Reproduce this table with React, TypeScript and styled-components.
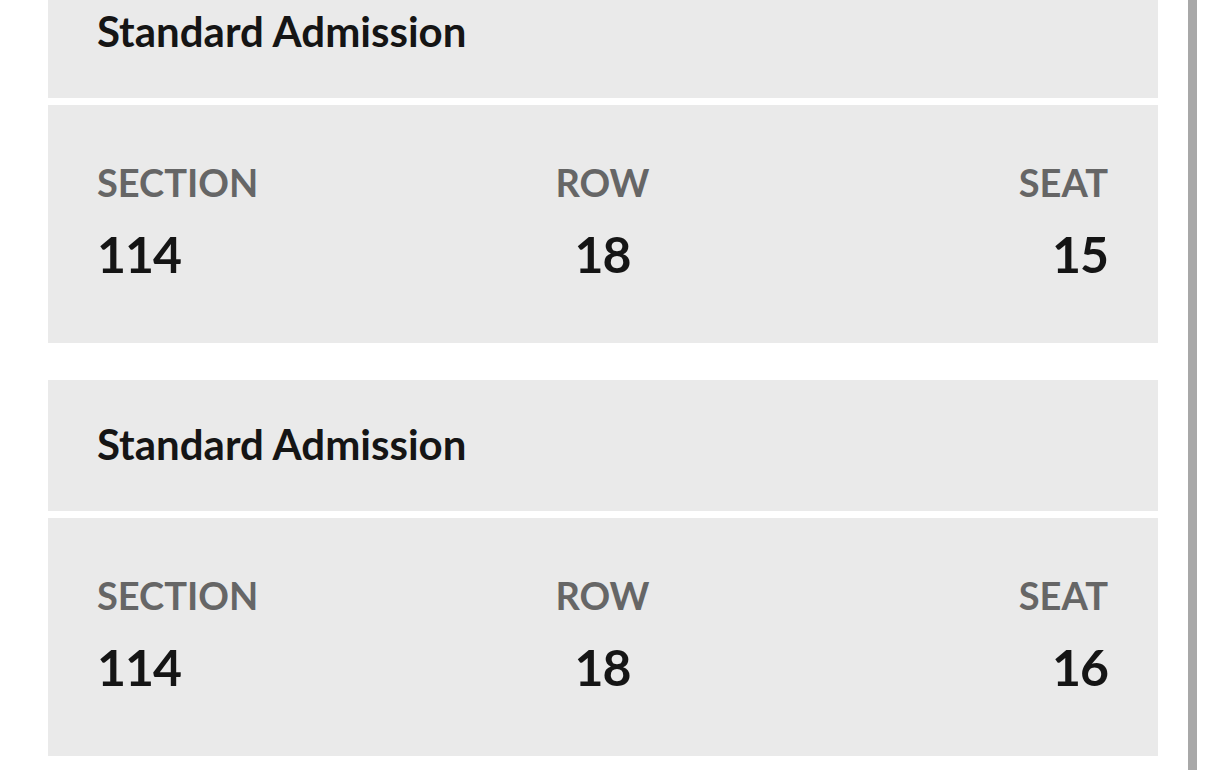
import * as React from "react"
import styled, { createGlobalStyle } from "styled-components"

const GlobalStyle = createGlobalStyle`
  html, body {
    margin: 0;
    padding: 0;
    background: #ffffff;
  }
  body {
    font-family: Lato, "Noto Sans", "Liberation Sans", sans-serif;
    color: #151515;
  }
`

interface Ticket {
  title: string
  section: string
  row: string
  seat: string
}

const tickets: Ticket[] = [
  { title: "Standard Admission", section: "114", row: "18", seat: "15" },
  { title: "Standard Admission", section: "114", row: "18", seat: "16" },
]

const Page = styled.div`
  display: flex;
  height: 770px;
  overflow: hidden;
`

const List = styled.div`
  display: flex;
  flex-direction: column;
  gap: 37px;
  width: 1110px;
  margin: -33px 0 0 48px;
`

const Scrollbar = styled.div`
  width: 9px;
  margin-left: 30px;
  background: #a8a8a8;
  flex-shrink: 0;
`

const Card = styled.div`
  display: flex;
  flex-direction: column;
  gap: 7px;
`

const Header = styled.div`
  height: 131px;
  box-sizing: border-box;
  display: flex;
  align-items: center;
  padding: 0 49px 3px;
  background: #eaeaea;
`

const Title = styled.h2`
  margin: 0;
  font-size: 42px;
  font-weight: 700;
  letter-spacing: 0;
  color: #151515;
`

const Body = styled.div`
  height: 238px;
  box-sizing: border-box;
  padding: 56px 50px 0 49px;
  display: grid;
  grid-template-columns: 1fr 1fr 1fr;
  background: #eaeaea;
`

const Field = styled.div<{ $align: "left" | "center" | "right" }>`
  display: flex;
  flex-direction: column;
  align-items: ${(p) =>
    p.$align === "left" ? "flex-start" : p.$align === "right" ? "flex-end" : "center"};
`

const Label = styled.div`
  font-size: 38px;
  font-weight: 700;
  line-height: 42px;
  color: #666666;
`

const Value = styled.div`
  margin-top: 24px;
  font-size: 50px;
  font-weight: 700;
  line-height: 54px;
  letter-spacing: -1px;
  color: #151515;
`

const TicketCard = ({ ticket }: { ticket: Ticket }) => (
  <Card>
    <Header>
      <Title>{ticket.title}</Title>
    </Header>
    <Body>
      <Field $align="left">
        <Label>SECTION</Label>
        <Value>{ticket.section}</Value>
      </Field>
      <Field $align="center">
        <Label>ROW</Label>
        <Value>{ticket.row}</Value>
      </Field>
      <Field $align="right">
        <Label>SEAT</Label>
        <Value>{ticket.seat}</Value>
      </Field>
    </Body>
  </Card>
)

const App = () => {
  return (
    <>
      <GlobalStyle />
      <Page>
        <List>
          {tickets.map((t, i) => (
            <TicketCard key={i} ticket={t} />
          ))}
        </List>
        <Scrollbar />
      </Page>
    </>
  )
}

export default App
